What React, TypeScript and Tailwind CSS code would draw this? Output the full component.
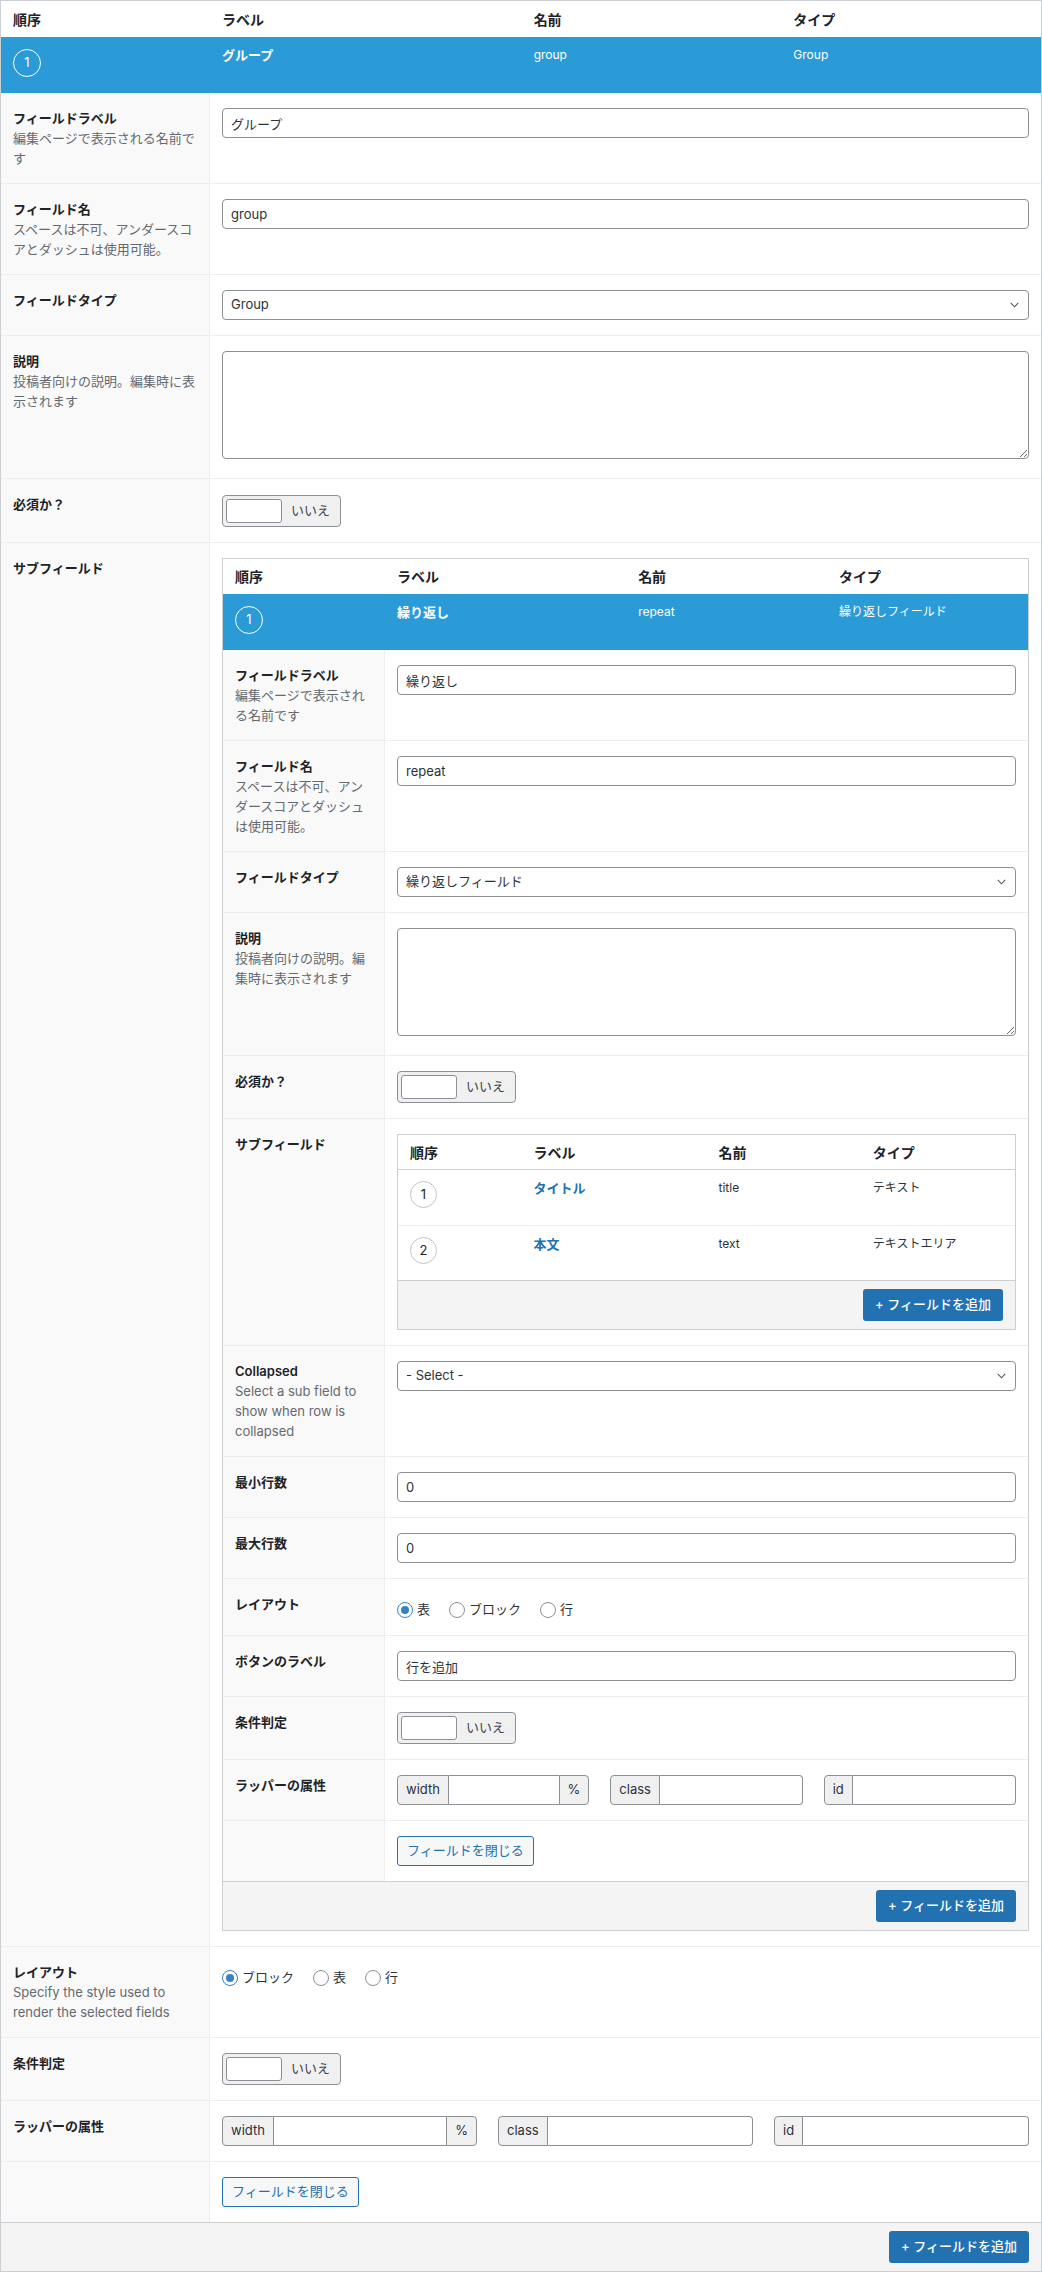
import type { ReactNode } from 'react'
import clsx from 'clsx'

const font = "font-['Inter','Noto_Sans_CJK_JP',sans-serif]"

type Sub = { n: number; label: string; name: string; type: string }

function Circle({ n, light }: { n: number; light?: boolean }) {
  return (
    <span
      className={clsx(
        'flex items-center justify-center rounded-full text-[13px]',
        light
          ? 'w-[27px] h-[27px] mt-[3px] border border-[#c3c4c7] text-[#1d2327] bg-white'
          : 'w-[28px] h-[28px] mt-1 border-[1.5px] border-white text-white'
      )}
    >
      {n}
    </span>
  )
}

function Row({
  label,
  desc,
  children,
  leftW,
  first,
}: {
  label?: string
  desc?: string
  children: ReactNode
  leftW: string
  first?: boolean
}) {
  return (
    <div className={clsx('flex', !first && 'border-t border-[#eeeeee]')}>
      <div className={clsx(leftW, 'shrink-0 bg-[#f9f9f9] border-r border-[#eeeeee] px-3 py-[15px]')}>
        {label && <div className="text-[13px] leading-5 font-semibold text-[#1d2327]">{label}</div>}
        {desc && <div className="text-[13px] leading-5 text-[#646970]">{desc}</div>}
      </div>
      <div className="flex-1 min-w-0 px-3 py-[15px]">{children}</div>
    </div>
  )
}

function TextInput({ value }: { value: string }) {
  return (
    <input
      readOnly
      value={value}
      className="block w-full h-[30px] border border-[#8c8f94] rounded-[4px] px-2 text-[13px] text-[#2c3338] bg-white outline-none"
    />
  )
}

function Select({ value }: { value: string }) {
  return (
    <div className="flex h-[30px] items-center justify-between border border-[#8c8f94] rounded-[4px] pl-2 pr-[9px] text-[13px] text-[#2c3338] bg-white">
      <span>{value}</span>
      <svg width="9" height="6" viewBox="0 0 9 6" fill="none">
        <polyline points="0.7,0.8 4.5,4.8 8.3,0.8" stroke="#50575e" strokeWidth="1.1" />
      </svg>
    </div>
  )
}

function TextArea() {
  return (
    <textarea
      readOnly
      className="block w-full h-[108px] mb-1 border border-[#8c8f94] rounded-[4px] bg-white outline-none"
    />
  )
}

function Toggle() {
  return (
    <div className="flex items-center w-[119px] h-[32px] p-[3px] border border-[#8c8f94] rounded-[4px] bg-[#f0f0f1]">
      <span className="w-[56px] h-full bg-white border border-[#8c8f94] rounded-[3px]" />
      <span className="ml-[9px] text-[13px] text-[#3c434a]">いいえ</span>
    </div>
  )
}

function Radios({ items, checked }: { items: string[]; checked: number }) {
  return (
    <div className="flex items-center pt-[5px] h-[26px]">
      {items.map((t, i) => (
        <div key={t} className="flex items-center mr-[19px]">
          <span
            className={clsx(
              'flex items-center justify-center w-4 h-4 rounded-full border bg-white',
              i === checked ? 'border-[#3582c4]' : 'border-[#8c8f94]'
            )}
          >
            {i === checked && <span className="w-2 h-2 rounded-full bg-[#3582c4]" />}
          </span>
          <span className="ml-1 text-[13px] text-[#2c3338]">{t}</span>
        </div>
      ))}
    </div>
  )
}

function Addon({ children, side }: { children: string; side: 'l' | 'r' }) {
  return (
    <span
      className={clsx(
        'flex items-center px-2 bg-[#f0f0f1] border border-[#8c8f94] text-[13px] text-[#2c3338]',
        side === 'l' ? 'rounded-l-[4px]' : 'rounded-r-[4px]'
      )}
    >
      {children}
    </span>
  )
}

function Wrapper() {
  return (
    <div className="grid grid-cols-3 gap-[21px]">
      <div className="flex h-[30px]">
        <Addon side="l">width</Addon>
        <input readOnly className="flex-1 min-w-0 border-y border-[#8c8f94] bg-white outline-none" />
        <Addon side="r">%</Addon>
      </div>
      <div className="flex h-[30px]">
        <Addon side="l">class</Addon>
        <input readOnly className="flex-1 min-w-0 border border-l-0 border-[#8c8f94] rounded-r-[4px] bg-white outline-none" />
      </div>
      <div className="flex h-[30px]">
        <Addon side="l">id</Addon>
        <input readOnly className="flex-1 min-w-0 border border-l-0 border-[#8c8f94] rounded-r-[4px] bg-white outline-none" />
      </div>
    </div>
  )
}

function CloseButton() {
  return (
    <button className="h-[30px] px-[9px] border border-[#2271b1] rounded-[3px] bg-[#f6f7f7] text-[13px] text-[#2271b1]">
      フィールドを閉じる
    </button>
  )
}

function AddButton() {
  return (
    <button className="h-[32px] px-3 rounded-[3px] bg-[#2271b1] text-[13px] font-medium text-white">
      + フィールドを追加
    </button>
  )
}

function Footer() {
  return (
    <div className="flex justify-end border-t border-[#ccd0d4] bg-[#f4f4f4] px-3 py-2">
      <AddButton />
    </div>
  )
}

function FieldHead({ cols, h, item }: { cols: string; h: string; item: Sub }) {
  return (
    <>
      <div className={clsx('grid items-center', cols, h)}>
        {['順序', 'ラベル', '名前', 'タイプ'].map((t) => (
          <div key={t} className="px-3 text-[14px] font-semibold text-[#1d2327]">
            {t}
          </div>
        ))}
      </div>
      <div className={clsx('grid h-[56px] bg-[#2a9bd7] text-white', cols)}>
        <div className="px-3 pt-2">
          <Circle n={item.n} />
        </div>
        <div className="px-3 pt-2 text-[13px] leading-5 font-semibold">{item.label}</div>
        <div className="px-3 pt-2 text-[12px] leading-5">{item.name}</div>
        <div className="px-3 pt-2 text-[12px] leading-5">{item.type}</div>
      </div>
    </>
  )
}

function SubList() {
  const rows: Sub[] = [
    { n: 1, label: 'タイトル', name: 'title', type: 'テキスト' },
    { n: 2, label: '本文', name: 'text', type: 'テキストエリア' },
  ]
  const cols = 'grid-cols-[2fr_3fr_2.5fr_2.5fr]'
  return (
    <div className="border border-[#ccd0d4] bg-white">
      <div className={clsx('grid items-center h-[35px] border-b border-[#ccd0d4]', cols)}>
        {['順序', 'ラベル', '名前', 'タイプ'].map((t) => (
          <div key={t} className="px-3 text-[14px] font-semibold text-[#1d2327]">
            {t}
          </div>
        ))}
      </div>
      {rows.map((r, i) => (
        <div key={r.n} className={clsx('grid h-[55px]', cols, i > 0 && 'border-t border-[#eeeeee]')}>
          <div className="px-3 pt-2">
            <Circle n={r.n} light />
          </div>
          <div className="px-3 pt-2 text-[13px] leading-5 font-semibold text-[#2271b1]">{r.label}</div>
          <div className="px-3 pt-2 text-[12px] leading-5 text-[#2c3338]">{r.name}</div>
          <div className="px-3 pt-2 text-[12px] leading-5 text-[#2c3338]">{r.type}</div>
        </div>
      ))}
      <Footer />
    </div>
  )
}

function Repeater() {
  const w = 'w-[162px]'
  return (
    <div className="border border-[#ccd0d4] bg-white">
      <FieldHead
        cols="grid-cols-[162px_3fr_2.5fr_2.5fr]"
        h="h-[35px]"
        item={{ n: 1, label: '繰り返し', name: 'repeat', type: '繰り返しフィールド' }}
      />
      <Row first leftW={w} label="フィールドラベル" desc="編集ページで表示される名前です">
        <TextInput value="繰り返し" />
      </Row>
      <Row leftW={w} label="フィールド名" desc="スペースは不可、アンダースコアとダッシュは使用可能。">
        <TextInput value="repeat" />
      </Row>
      <Row leftW={w} label="フィールドタイプ">
        <Select value="繰り返しフィールド" />
      </Row>
      <Row leftW={w} label="説明" desc="投稿者向けの説明。編集時に表示されます">
        <TextArea />
      </Row>
      <Row leftW={w} label="必須か？">
        <Toggle />
      </Row>
      <Row leftW={w} label="サブフィールド">
        <SubList />
      </Row>
      <Row leftW={w} label="Collapsed" desc="Select a sub field to show when row is collapsed">
        <Select value="- Select -" />
      </Row>
      <Row leftW={w} label="最小行数">
        <TextInput value="0" />
      </Row>
      <Row leftW={w} label="最大行数">
        <TextInput value="0" />
      </Row>
      <Row leftW={w} label="レイアウト">
        <Radios items={['表', 'ブロック', '行']} checked={0} />
      </Row>
      <Row leftW={w} label="ボタンのラベル">
        <TextInput value="行を追加" />
      </Row>
      <Row leftW={w} label="条件判定">
        <Toggle />
      </Row>
      <Row leftW={w} label="ラッパーの属性">
        <Wrapper />
      </Row>
      <Row leftW={w}>
        <CloseButton />
      </Row>
      <Footer />
    </div>
  )
}

export default function App() {
  const w = 'w-[209px]'
  return (
    <div className={clsx(font, 'w-[1042px] bg-white')}>
      <div className="border border-[#ccd0d4] bg-white">
        <FieldHead
          cols="grid-cols-[209px_3fr_2.5fr_2.5fr]"
          h="h-[36px]"
          item={{ n: 1, label: 'グループ', name: 'group', type: 'Group' }}
        />
        <Row first leftW={w} label="フィールドラベル" desc="編集ページで表示される名前です">
          <TextInput value="グループ" />
        </Row>
        <Row leftW={w} label="フィールド名" desc="スペースは不可、アンダースコアとダッシュは使用可能。">
          <TextInput value="group" />
        </Row>
        <Row leftW={w} label="フィールドタイプ">
          <Select value="Group" />
        </Row>
        <Row leftW={w} label="説明" desc="投稿者向けの説明。編集時に表示されます">
          <TextArea />
        </Row>
        <Row leftW={w} label="必須か？">
          <div className="pt-px">
            <Toggle />
          </div>
        </Row>
        <Row leftW={w} label="サブフィールド">
          <Repeater />
        </Row>
        <Row leftW={w} label="レイアウト" desc="Specify the style used to render the selected fields">
          <Radios items={['ブロック', '表', '行']} checked={0} />
        </Row>
        <Row leftW={w} label="条件判定">
          <Toggle />
        </Row>
        <Row leftW={w} label="ラッパーの属性">
          <Wrapper />
        </Row>
        <Row leftW={w}>
          <CloseButton />
        </Row>
        <Footer />
      </div>
    </div>
  )
}
